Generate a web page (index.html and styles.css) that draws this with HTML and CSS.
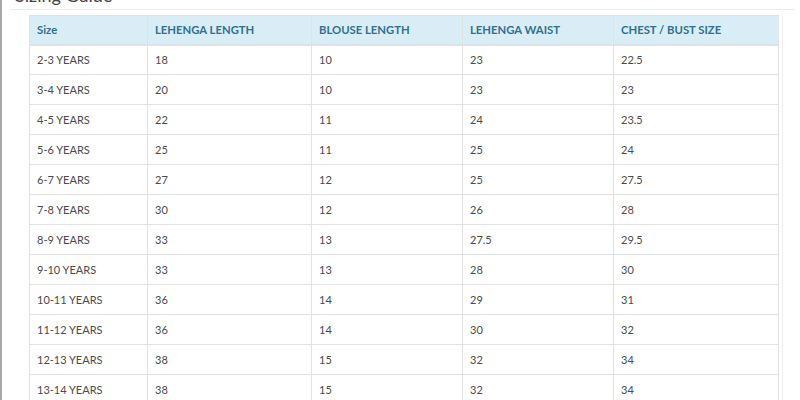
FILE: index.html
```html
<!DOCTYPE html>
<html>
<head>
<meta charset="utf-8">
<link rel="stylesheet" href="styles.css">
</head>
<body>
<div class="page">
  <div class="panel">
    <h4 class="title">Sizing Guide</h4>
    <div class="panel-body">
      <div class="table-wrap">
        <table class="sizes">
          <colgroup>
            <col class="c1"><col class="c2"><col class="c3"><col class="c4"><col class="c5">
          </colgroup>
          <thead>
            <tr><th>Size</th><th>LEHENGA LENGTH</th><th>BLOUSE LENGTH</th><th>LEHENGA WAIST</th><th>CHEST / BUST SIZE</th></tr>
          </thead>
          <tbody>
            <tr><td>2-3 YEARS</td><td>18</td><td>10</td><td>23</td><td>22.5</td></tr>
            <tr><td>3-4 YEARS</td><td>20</td><td>10</td><td>23</td><td>23</td></tr>
            <tr><td>4-5 YEARS</td><td>22</td><td>11</td><td>24</td><td>23.5</td></tr>
            <tr><td>5-6 YEARS</td><td>25</td><td>11</td><td>25</td><td>24</td></tr>
            <tr><td>6-7 YEARS</td><td>27</td><td>12</td><td>25</td><td>27.5</td></tr>
            <tr><td>7-8 YEARS</td><td>30</td><td>12</td><td>26</td><td>28</td></tr>
            <tr><td>8-9 YEARS</td><td>33</td><td>13</td><td>27.5</td><td>29.5</td></tr>
            <tr><td>9-10 YEARS</td><td>33</td><td>13</td><td>28</td><td>30</td></tr>
            <tr><td>10-11 YEARS</td><td>36</td><td>14</td><td>29</td><td>31</td></tr>
            <tr><td>11-12 YEARS</td><td>36</td><td>14</td><td>30</td><td>32</td></tr>
            <tr><td>12-13 YEARS</td><td>38</td><td>15</td><td>32</td><td>34</td></tr>
            <tr><td>13-14 YEARS</td><td>38</td><td>15</td><td>32</td><td>34</td></tr>
          </tbody>
        </table>
      </div>
    </div>
  </div>
</div>
</body>
</html>
```
FILE: styles.css
```css
html, body {
  margin: 0;
  padding: 0;
  background: #fff;
  overflow: hidden;
  height: 400px;
}
body {
  font-family: Lato, "Open Sans", sans-serif;
  color: #444;
}
.page {
  border-left: 2px solid #a8a8a8;
  height: 400px;
  box-sizing: border-box;
  padding-left: 8px;
  padding-right: 5px;
  overflow: hidden;
}
.title {
  margin: -16px 0 0 0;
  font-size: 18px;
  line-height: 22px;
  height: 22px;
  font-weight: 400;
  color: #444;
  padding: 0 0 3px 5px;
  border-bottom: 1px solid #ececec;
}
.panel-body {
  padding: 5px 0 0 19px;
}
.table-wrap {
  width: 753px;
  border-right: 1px solid #eee;
}
.sizes {
  border-collapse: collapse;
  width: 749px;
  table-layout: fixed;
  font-size: 11px;
}
.sizes th, .sizes td {
  box-sizing: border-box;
  border: 1px solid #e2e2e2;
  text-align: left;
  padding: 0 7px;
  height: 30px;
  white-space: nowrap;
}
.sizes th {
  background: #d9edf7;
  color: #31708f;
  font-weight: 700;
  font-size: 11.3px;
  height: 29px;
  border-bottom: 2px solid #dde3e6;
}
.sizes td {
  color: #4a4a4a;
}
.c1 { width: 118px; }
.c2 { width: 164px; }
.c3 { width: 151px; }
.c4 { width: 151px; }
.c5 { width: 165px; }
```
